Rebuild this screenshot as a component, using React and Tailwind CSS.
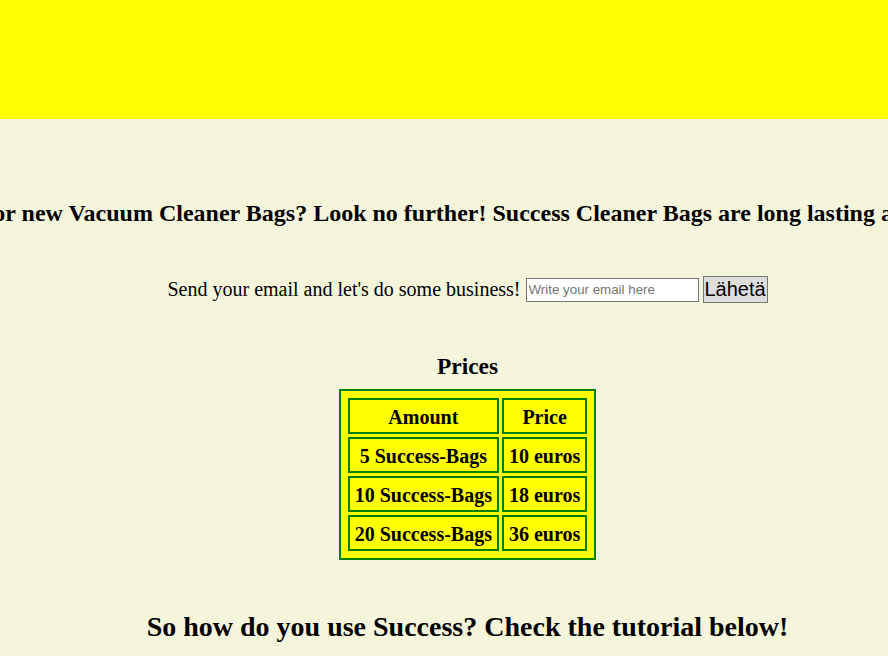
export default function App() {
  const rows = [
    ["5 Success-Bags", "10 euros"],
    ["10 Success-Bags", "18 euros"],
    ["20 Success-Bags", "36 euros"],
  ];
  const cell = "border-2 border-[#008000] px-[5px] pt-[5px] pb-[3px] leading-[24px] font-bold text-center whitespace-nowrap";
  return (
    <div
      className="h-[656px] w-full overflow-hidden bg-[#f5f5dc] text-black text-[20px]"
      style={{ fontFamily: '"Liberation Serif", "Times New Roman", serif' }}
    >
      <div className="h-[119px] bg-[#ffff00]" />
      <div className="mt-[80px] overflow-hidden">
        <h2 className="-ml-[106px] whitespace-nowrap text-[24px] font-bold leading-[28px]">
          Looking for new Vacuum Cleaner Bags? Look no further! Success Cleaner Bags are long lasting and durable!
        </h2>
      </div>
      <div className="pl-[47px]">
        <div className="mt-[49px] flex h-[27px] items-center justify-center">
          <span className="leading-[27px]">Send your email and let's do some business!</span>
          <input
            type="email"
            placeholder="Write your email here"
            className="ml-[5px] h-[24px] w-[173px] border border-[#767676] bg-white px-[2px] text-[13.33px] placeholder:text-[#757575] outline-none"
            style={{ fontFamily: '"Liberation Sans", Arial, sans-serif' }}
          />
          <button
            className="ml-[4px] h-[27px] w-[65px] border border-[#767676] bg-[#dddddd] px-[1px] text-[20px] leading-[23px] text-black"
            style={{ fontFamily: '"Liberation Sans", Arial, sans-serif' }}
          >
            Lähetä
          </button>
        </div>
        <h3 className="mt-[49px] text-center text-[23.4px] font-bold leading-[28px]">Prices</h3>
        <div className="mt-[9px] flex justify-center">
          <table className="border-separate border-spacing-[3px] border-2 border-[#008000] bg-[#ffff00] p-[4px]">
            <thead>
              <tr>
                <th className={cell}>Amount</th>
                <th className={cell}>Price</th>
              </tr>
            </thead>
            <tbody>
              {rows.map((r) => (
                <tr key={r[0]}>
                  <td className={cell}>{r[0]}</td>
                  <td className={cell}>{r[1]}</td>
                </tr>
              ))}
            </tbody>
          </table>
        </div>
        <h2 className="mt-[51px] text-center text-[28px] font-bold leading-[32px]">
          So how do you use Success? Check the tutorial below!
        </h2>
      </div>
    </div>
  );
}
